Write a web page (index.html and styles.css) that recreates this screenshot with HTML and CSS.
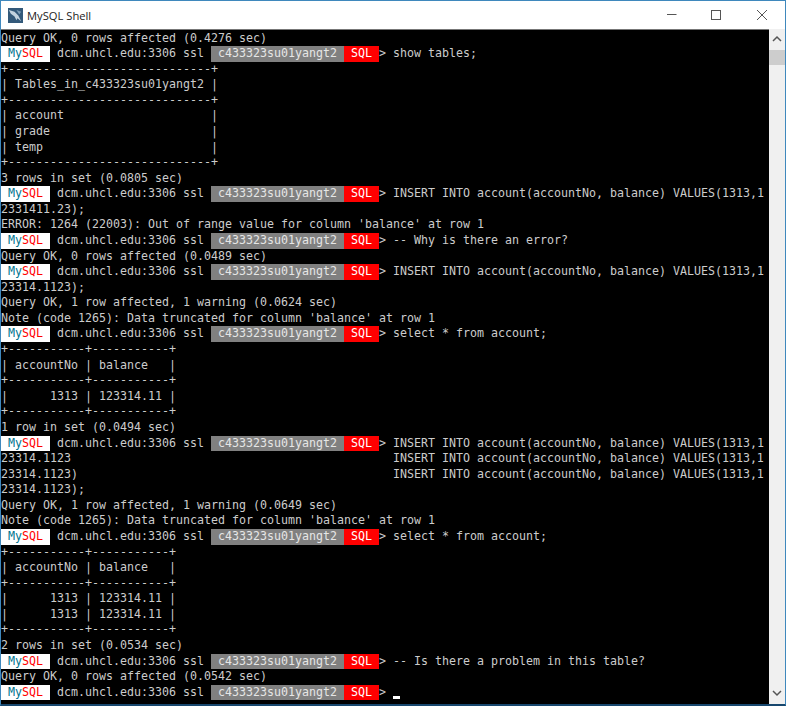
FILE: index.html
```html
<!DOCTYPE html>
<html lang="en">
<head>
<meta charset="utf-8">
<title>MySQL Shell</title>
<link rel="stylesheet" href="styles.css">
</head>
<body>
<div class="window">
  <header class="titlebar">
    <svg class="app-icon" viewBox="0 0 16 16"><rect width="16" height="16" fill="#33597a"/><path d="M1 2l6 2 4 4 3 6-4-3-1 2-2-4-4-3z" fill="#c3d3df"/><path d="M9 2l5 2-2 3z" fill="#7f9fb8"/></svg>
    <span class="app-title">MySQL Shell</span>
    <div class="controls">
      <svg class="ctl" viewBox="0 0 46 29"><path d="M20 13.5h9.5" stroke="#555" fill="none"/></svg>
      <svg class="ctl" viewBox="0 0 46 29"><rect x="18.5" y="9.5" width="9" height="9" stroke="#555" fill="none"/></svg>
      <svg class="ctl" viewBox="0 0 46 29"><path d="M18 9l10 10M28 9l-10 10" stroke="#555" fill="none"/></svg>
    </div>
  </header>
  <div class="client">
    <main class="term">
      <div class="line">Query OK, 0 rows affected (0.4276 sec)</div>
      <div class="line"><span class="p-my"> <i class="my">My</i><i class="sql">SQL</i> </span> dcm.uhcl.edu:3306 ssl <span class="p-db"> c433323su01yangt2 </span><span class="p-mode"> SQL </span><b class="gt">&gt;</b> show tables;</div>
      <div class="line">+-----------------------------+</div>
      <div class="line">| Tables_in_c433323su01yangt2 |</div>
      <div class="line">+-----------------------------+</div>
      <div class="line">| account                     |</div>
      <div class="line">| grade                       |</div>
      <div class="line">| temp                        |</div>
      <div class="line">+-----------------------------+</div>
      <div class="line">3 rows in set (0.0805 sec)</div>
      <div class="line"><span class="p-my"> <i class="my">My</i><i class="sql">SQL</i> </span> dcm.uhcl.edu:3306 ssl <span class="p-db"> c433323su01yangt2 </span><span class="p-mode"> SQL </span><b class="gt">&gt;</b> INSERT INTO account(accountNo, balance) VALUES(1313,1</div>
      <div class="line">2331411.23);</div>
      <div class="line">ERROR: 1264 (22003): Out of range value for column 'balance' at row 1</div>
      <div class="line"><span class="p-my"> <i class="my">My</i><i class="sql">SQL</i> </span> dcm.uhcl.edu:3306 ssl <span class="p-db"> c433323su01yangt2 </span><span class="p-mode"> SQL </span><b class="gt">&gt;</b> -- Why is there an error?</div>
      <div class="line">Query OK, 0 rows affected (0.0489 sec)</div>
      <div class="line"><span class="p-my"> <i class="my">My</i><i class="sql">SQL</i> </span> dcm.uhcl.edu:3306 ssl <span class="p-db"> c433323su01yangt2 </span><span class="p-mode"> SQL </span><b class="gt">&gt;</b> INSERT INTO account(accountNo, balance) VALUES(1313,1</div>
      <div class="line">23314.1123);</div>
      <div class="line">Query OK, 1 row affected, 1 warning (0.0624 sec)</div>
      <div class="line">Note (code 1265): Data truncated for column 'balance' at row 1</div>
      <div class="line"><span class="p-my"> <i class="my">My</i><i class="sql">SQL</i> </span> dcm.uhcl.edu:3306 ssl <span class="p-db"> c433323su01yangt2 </span><span class="p-mode"> SQL </span><b class="gt">&gt;</b> select * from account;</div>
      <div class="line">+-----------+-----------+</div>
      <div class="line">| accountNo | balance   |</div>
      <div class="line">+-----------+-----------+</div>
      <div class="line">|      1313 | 123314.11 |</div>
      <div class="line">+-----------+-----------+</div>
      <div class="line">1 row in set (0.0494 sec)</div>
      <div class="line"><span class="p-my"> <i class="my">My</i><i class="sql">SQL</i> </span> dcm.uhcl.edu:3306 ssl <span class="p-db"> c433323su01yangt2 </span><span class="p-mode"> SQL </span><b class="gt">&gt;</b> INSERT INTO account(accountNo, balance) VALUES(1313,1</div>
      <div class="line">23314.1123                                              INSERT INTO account(accountNo, balance) VALUES(1313,1</div>
      <div class="line">23314.1123)                                             INSERT INTO account(accountNo, balance) VALUES(1313,1</div>
      <div class="line">23314.1123);</div>
      <div class="line">Query OK, 1 row affected, 1 warning (0.0649 sec)</div>
      <div class="line">Note (code 1265): Data truncated for column 'balance' at row 1</div>
      <div class="line"><span class="p-my"> <i class="my">My</i><i class="sql">SQL</i> </span> dcm.uhcl.edu:3306 ssl <span class="p-db"> c433323su01yangt2 </span><span class="p-mode"> SQL </span><b class="gt">&gt;</b> select * from account;</div>
      <div class="line">+-----------+-----------+</div>
      <div class="line">| accountNo | balance   |</div>
      <div class="line">+-----------+-----------+</div>
      <div class="line">|      1313 | 123314.11 |</div>
      <div class="line">|      1313 | 123314.11 |</div>
      <div class="line">+-----------+-----------+</div>
      <div class="line">2 rows in set (0.0534 sec)</div>
      <div class="line"><span class="p-my"> <i class="my">My</i><i class="sql">SQL</i> </span> dcm.uhcl.edu:3306 ssl <span class="p-db"> c433323su01yangt2 </span><span class="p-mode"> SQL </span><b class="gt">&gt;</b> -- Is there a problem in this table?</div>
      <div class="line">Query OK, 0 rows affected (0.0542 sec)</div>
      <div class="line"><span class="p-my"> <i class="my">My</i><i class="sql">SQL</i> </span> dcm.uhcl.edu:3306 ssl <span class="p-db"> c433323su01yangt2 </span><span class="p-mode"> SQL </span><b class="gt">&gt;</b> <span class="cursor"></span></div>
    </main>
    <aside class="scrollbar">
      <svg class="arrow" viewBox="0 0 16 21"><path d="M4 12l4-4 4 4" stroke="#555" stroke-width="1.5" fill="none"/></svg>
      <div class="track"><div class="thumb"></div></div>
      <svg class="arrow" viewBox="0 0 16 21"><path d="M4 8l4 4 4-4" stroke="#555" stroke-width="1.5" fill="none"/></svg>
    </aside>
  </div>
</div>
</body>
</html>
```
FILE: styles.css
```css
html, body { margin: 0; height: 100%; background: #fff; }
.window {
  box-sizing: border-box; width: 786px; height: 706px;
  border: 1px solid #3f88bd; border-bottom: 2px solid #17476e;
  display: flex; flex-direction: column; overflow: hidden;
}
.titlebar { height: 28px; flex: none; display: flex; align-items: center; background: #fff; padding-left: 7px; }
.app-icon { width: 15px; height: 15px; margin-right: 4px; }
.app-title { font: 11.2px "Open Sans", "Liberation Sans", sans-serif; color: #222; }
.controls { margin-left: auto; display: flex; }
.ctl { width: 46px; height: 29px; }
.client { flex: 1; display: flex; min-height: 0; }
.term {
  flex: 1; background: #000; color: #ccc; overflow: hidden; border-top: 1px solid #777;
  padding-top: 0.5px; font: 11.63px "DejaVu Sans Mono", monospace;
}
.line { height: 15.58px; line-height: 15.58px; white-space: pre; }
.p-my { display: inline-block; height: 15.58px; background: #fff; vertical-align: top; }
.my { color: #00758f; font-style: normal; }
.sql { color: #f00; font-style: normal; }
.p-db { display: inline-block; height: 15.58px; background: #808080; color: #e6e6e6; vertical-align: top; }
.p-mode { display: inline-block; height: 15.58px; background: #f00; color: #fff; vertical-align: top; }
.gt { font-weight: normal; color: #ccc; }
.cursor { display: inline-block; width: 7px; height: 3px; background: #fff; vertical-align: -3px; }
.scrollbar { width: 16px; flex: none; background: #f0f0f0; display: flex; flex-direction: column; }
.arrow { width: 16px; height: 21px; flex: none; }
.track { flex: 1; }
.thumb { height: 15px; background: #cdcdcd; }
```
